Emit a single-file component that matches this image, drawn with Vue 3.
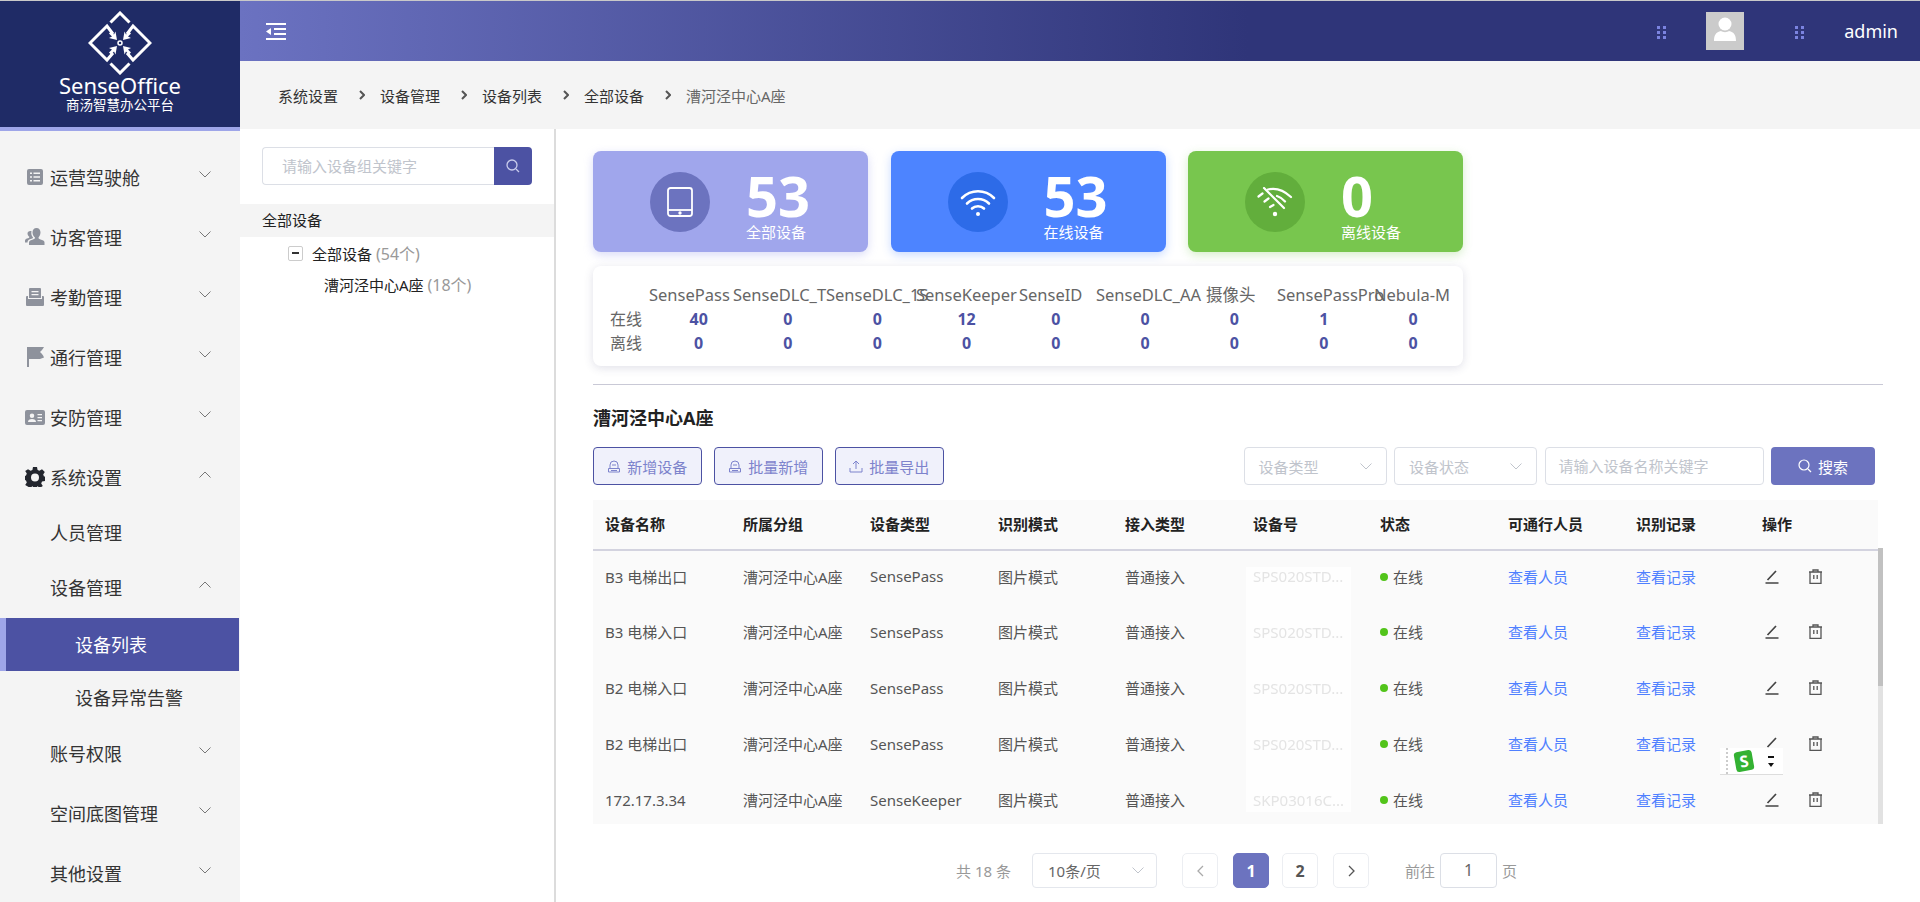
<template>
  <div class="page">
    <aside class="side">
      <div class="logo">
        <svg class="logo-mark" width="64" height="64" viewBox="0 0 64 64" fill="none" stroke="#fff" stroke-width="3">
          <path d="M22.500 11.500 32 2l9.500 9.500M22.500 52.500 32 62l9.500-9.500" />
          <path d="M25 23l-6-8L2 32l17 17 6-7" />
          <path d="M39 23l6-8 17 17-17 17-6-7" />
          <circle cx="32" cy="32" r="2" stroke-width="1.500" />
          <path fill="#fff" stroke="none" d="M29 29l-8-2 3-1.500-3-3 2-2 3 3 1.500-3zM35 29l8-2-3-1.500 3-3-2-2-3 3-1.500-3zM29 35l-8 2 3 1.500-3 3 2 2 3-3 1.500 3zM35 35l8 2-3 1.500 3 3-2 2-3-3-1.500 3z" />
        </svg>
        <div class="logo-name">SenseOffice</div>
        <div class="logo-sub">商汤智慧办公平台</div>
      </div>
      <nav class="menu">
        <div v-for="m in menu" :key="m.label" class="menu-item" :class="[m.kind, { active: m.active }]">
          <svg v-if="m.icon" class="menu-icon" :class="{ dark: m.icon === 'gear' }" width="20" height="20" viewBox="0 0 20 20" fill="currentColor">
            <path fill-rule="evenodd" :d="menuIcons[m.icon]" />
          </svg>
          <span>{{ m.label }}</span>
          <svg v-if="m.arrow" class="menu-arrow" width="12" height="7" viewBox="0 0 12 7" fill="none" stroke="#777" stroke-width="1">
            <path :d="m.arrow === 'up' ? 'M.5 6.500 6 1l5.500 5.500' : 'M.5.5 6 6 11.500.5'" />
          </svg>
        </div>
      </nav>
    </aside>

    <div class="right">
      <header class="topbar">
        <svg width="20" height="17" viewBox="0 0 20 17" fill="#fff">
          <path d="M0 0h20v2H0zM8 5h12v2H8zM8 10h12v2H8zM0 15h20v2H0zM0 8.500 5 5v7z" />
        </svg>
        <div class="topbar-right">
          <svg class="dots" width="9" height="13" viewBox="0 0 9 13" fill="#7b83e0">
            <path d="M0 0h3v3H0zM6 0h3v3H6zM0 5h3v3H0zM6 5h3v3H6zM0 10h3v3H0zM6 10h3v3H6z" />
          </svg>
          <div class="avatar">
            <svg width="22" height="24" viewBox="0 0 22 24" fill="#fff">
              <circle cx="11" cy="7" r="6.500" />
              <path d="M0 24c0-6 2-9 7-10 2 1.500 6 1.500 8 0 5 1 7 4 7 10z" />
            </svg>
          </div>
          <svg class="dots dots-2" width="9" height="13" viewBox="0 0 9 13" fill="#7b83e0">
            <path d="M0 0h3v3H0zM6 0h3v3H6zM0 5h3v3H0zM6 5h3v3H6zM0 10h3v3H0zM6 10h3v3H6z" />
          </svg>
          <span class="admin">admin</span>
        </div>
      </header>

      <div class="crumbs">
        <template v-for="(c, i) in crumbs" :key="c">
          <span class="crumb" :class="{ last: i === crumbs.length - 1 }">{{ c }}</span>
          <svg v-if="i < crumbs.length - 1" class="crumb-sep" width="6" height="10" viewBox="0 0 6 10" fill="none" stroke="#555" stroke-width="2">
            <path d="M1 1l4 4-4 4" />
          </svg>
        </template>
      </div>

      <div class="body">
        <section class="tree">
          <div class="tree-search">
            <div class="tree-input">请输入设备组关键字</div>
            <div class="tree-btn">
              <svg width="14" height="14" viewBox="0 0 14 14" fill="none" stroke="#c9ccec" stroke-width="1.300">
                <circle cx="6" cy="6" r="5" /><path d="M10 10l3 3" />
              </svg>
            </div>
          </div>
          <div class="tree-root">全部设备</div>
          <div class="tree-node">
            <span class="tree-toggle"><i></i></span>
            全部设备 <em>(54个)</em>
          </div>
          <div class="tree-leaf">漕河泾中心A座 <em>(18个)</em></div>
        </section>

        <main class="main">
          <div class="cards">
            <div v-for="c in cards" :key="c.label" class="card" :class="c.cls">
              <div class="card-circle">
                <svg v-if="c.cls === 'all'" width="26" height="30" viewBox="0 0 26 30" fill="none" stroke="#fff" stroke-width="1.800">
                  <rect x="1" y="1" width="24" height="28" rx="2.500" />
                  <path d="M1 23h24" />
                  <circle cx="13" cy="26" r=".8" fill="#fff" />
                </svg>
                <svg v-else-if="c.cls === 'on'" width="36" height="30" viewBox="0 0 36 30" fill="none" stroke="#fff" stroke-width="2.600" stroke-linecap="round">
                  <path d="M2 11c9-9 23-9 32 0M7 16.500c6-6 16-6 22 0M12 21.500c3-3 9-3 12 0" />
                  <circle cx="18" cy="27" r="2" fill="#fff" stroke="none" />
                </svg>
                <svg v-else width="36" height="30" viewBox="0 0 36 30" fill="none" stroke="#fff" stroke-width="2.200" stroke-linecap="round">
                  <path d="M11 2.500c8-2 16 1 23 7.500M1.500 9.500l4-3M20 9c3 1 6 3 8 5.500M7.500 14.500l4-3M13 20l3.500-2" />
                  <path d="M7 1l20 20" />
                  <circle cx="18" cy="27" r="2.200" fill="#fff" stroke="none" />
                </svg>
              </div>
              <div class="card-text">
                <div class="card-num">{{ c.num }}</div>
                <div class="card-label">{{ c.label }}</div>
              </div>
            </div>
          </div>

          <div class="stats">
            <div class="stat-heads">
              <span v-for="n in statNames" :key="n">{{ n }}</span>
            </div>
            <div class="stat-row">
              <span class="stat-label">在线</span>
              <b v-for="(v, i) in online" :key="i">{{ v }}</b>
            </div>
            <div class="stat-row">
              <span class="stat-label">离线</span>
              <b v-for="(v, i) in offline" :key="i">{{ v }}</b>
            </div>
          </div>

          <div class="divider"></div>
          <h2 class="title">漕河泾中心A座</h2>

          <div class="toolbar">
            <button v-for="b in actions" :key="b.label" class="act-btn">
              <svg width="14" height="14" viewBox="0 0 14 14" fill="none" stroke="currentColor" stroke-width="1">
                <path v-if="b.up" d="M1 9v4h12V9M7 10V2M4 5l3-3 3 3" />
                <path v-else d="M1.500 13V9.500h11V13zM3 9.500V6a4 4 0 0 1 8 0v3.500M5 6h4M4 11.500h6" />
              </svg>
              {{ b.label }}
            </button>
            <div class="filters">
              <div v-for="s in selects" :key="s" class="select">
                <span>{{ s }}</span>
                <svg width="12" height="7" viewBox="0 0 12 7" fill="none" stroke="#c0c4cc" stroke-width="1"><path d="M.5.5 6 6 11.500.5" /></svg>
              </div>
              <div class="keyword">请输入设备名称关键字</div>
              <button class="search-btn">
                <svg width="14" height="14" viewBox="0 0 14 14" fill="none" stroke="#fff" stroke-width="1.200">
                  <circle cx="6" cy="6" r="5" /><path d="M10 10l3 3" />
                </svg>
                搜索
              </button>
            </div>
          </div>

          <div class="table-area">
            <div class="table-wrap">
              <div class="sn-mask"></div>
              <table class="devices">
                <colgroup>
                  <col v-for="(w, i) in colWidths" :key="i" :width="w" />
                </colgroup>
                <thead>
                  <tr><th v-for="h in columns" :key="h">{{ h }}</th></tr>
                </thead>
                <tbody>
                  <tr v-for="r in rows" :key="r.name">
                    <td>{{ r.name }}</td>
                    <td>漕河泾中心A座</td>
                    <td>{{ r.type }}</td>
                    <td>图片模式</td>
                    <td>普通接入</td>
                    <td><span class="sn">{{ r.sn }}</span></td>
                    <td><i class="dot"></i>在线</td>
                    <td><a class="link">查看人员</a></td>
                    <td><a class="link">查看记录</a></td>
                    <td>
                      <div class="ops">
                        <svg width="14" height="15" viewBox="0 0 14 15" fill="none" stroke="#444" stroke-width="1.700">
                          <path d="M2.500 11 11 2M.5 14h13" />
                        </svg>
                        <svg width="15" height="15" viewBox="0 0 15 15" fill="none" stroke="#555" stroke-width="1.300">
                          <path d="M1 3h13M5 3V1h5v2M2 3v11.500h11V3M5.800 6v4M9.200 6v4" />
                        </svg>
                      </div>
                    </td>
                  </tr>
                </tbody>
              </table>
              <div class="ime">
                <span class="ime-logo"><span>S</span></span>
                <span class="ime-mark"><i></i><u></u></span>
              </div>
            </div>
            <div class="scrollbar"><div class="thumb"></div></div>
          </div>

          <div class="pager">
            <span class="total">共 18 条</span>
            <div class="size">
              <span>10条/页</span>
              <svg width="12" height="7" viewBox="0 0 12 7" fill="none" stroke="#c0c4cc" stroke-width="1"><path d="M.5.5 6 6 11.500.5" /></svg>
            </div>
            <div class="pg-btn pg-prev">
              <svg width="7" height="12" viewBox="0 0 7 12" fill="none" stroke="#aaa" stroke-width="1.300"><path d="M6 1 1 6l5 5" /></svg>
            </div>
            <div class="pg-btn pg-on">1</div>
            <div class="pg-btn">2</div>
            <div class="pg-btn pg-next">
              <svg width="7" height="12" viewBox="0 0 7 12" fill="none" stroke="#555" stroke-width="1.300"><path d="m1 1 5 5-5 5" /></svg>
            </div>
            <span class="goto">前往</span>
            <div class="pg-input">1</div>
            <span class="goto-end">页</span>
          </div>
        </main>
      </div>
    </div>
  </div>
</template>

<script setup>
const menuIcons = {
  list: 'M4 2h12a2 2 0 0 1 2 2v12a2 2 0 0 1-2 2H4a2 2 0 0 1-2-2V4a2 2 0 0 1 2-2zM5 5.500V7h2V5.500zM8.500 5.500V7H15V5.500zM5 9.200v1.500h2V9.200zM8.500 9.200v1.500H15V9.200zM5 13v1.500h2V13zM8.500 13v1.500H15V13z',
  users: 'M11.500 1c2.500 0 4 2 4 4.500S14 10 13.500 10.500c0 1 .5 1.500 2 2 2 .7 4 1 4 3V18H4v-2.500c0-2 2-2.300 4-3 1.500-.5 2-1 2-2C9 10 7.500 8 7.500 5.500S9 1 11.500 1zM5.500 4c.4 0 .8 0 1 .2-.5 2-.2 4.300 1.500 6.300 0 .7-.5 1-1.500 1.300-2.500.8-4 1.500-4 3.700H0v-2c0-1.500 1.500-1.800 3-2.300 1-.3 1.300-.8 1.300-1.500C3.500 9.200 2.500 8 2.500 6.500 2.500 5 3.500 4 5.500 4z',
  print: 'M5 1h10a1 1 0 0 1 1 1v9H4V2a1 1 0 0 1 1-1zM6.500 4v1.300h7V4zM6.500 7v1.300h7V7zM2 9h1v3h14V9h1a1 1 0 0 1 1 1v8a1 1 0 0 1-1 1H2a1 1 0 0 1-1-1v-8a1 1 0 0 1 1-1z',
  flag: 'M2 0h2v20H2zM4 0h15c-1 2-2 3-4 5 2 2 3 3 4 5.500l-4 1.500H4z',
  card: 'M2 3h16a2 2 0 0 1 2 2v11a2 2 0 0 1-2 2H2a2 2 0 0 1-2-2V5a2 2 0 0 1 2-2zM7 6.500A2.200 2.200 0 1 0 7 11 2.200 2.200 0 0 0 7 6.500zM3 15h8c0-2-1.500-3-4-3s-4 1-4 3zM12.500 7v1.300H17V7zM12.500 10v1.300H17V10zM12.500 13v1.300H17V13z',
  gear: 'M8 0h4l.6 3 1.800.8L17 2.200 19.800 5l-1.600 2.600.8 1.800 3 .6-2 0v0 4l-3 .6-.8 1.800 1.600 2.600L15 20.800l-2.600-1.600-.4.200V20H8v-.6l-.4-.2L5 20.800 .2 18l1.600-2.600L1 13.600l-1-.6V9l1-.6.8-1.800L.2 4 3 2.200l2.600 1.600L7.400 3zM10 6.500a4 4 0 1 0 0 8 4 4 0 0 0 0-8z',
}

const menu = [
  { label: '运营驾驶舱', icon: 'list', arrow: 'down', kind: 'top' },
  { label: '访客管理', icon: 'users', arrow: 'down', kind: 'top' },
  { label: '考勤管理', icon: 'print', arrow: 'down', kind: 'top' },
  { label: '通行管理', icon: 'flag', arrow: 'down', kind: 'top' },
  { label: '安防管理', icon: 'card', arrow: 'down', kind: 'top' },
  { label: '系统设置', icon: 'gear', arrow: 'up', kind: 'top' },
  { label: '人员管理', kind: 'sub short' },
  { label: '设备管理', arrow: 'up', kind: 'sub' },
  { label: '设备列表', kind: 'leaf', active: true },
  { label: '设备异常告警', kind: 'leaf' },
  { label: '账号权限', arrow: 'down', kind: 'sub' },
  { label: '空间底图管理', arrow: 'down', kind: 'sub' },
  { label: '其他设置', arrow: 'down', kind: 'sub' },
]

const crumbs = ['系统设置', '设备管理', '设备列表', '全部设备', '漕河泾中心A座']

const cards = [
  { cls: 'all', num: 53, label: '全部设备' },
  { cls: 'on', num: 53, label: '在线设备' },
  { cls: 'off', num: 0, label: '离线设备' },
]

const statNames = ['SensePass', 'SenseDLC_T', 'SenseDLC_1S', 'SenseKeeper', 'SenseID', 'SenseDLC_AA', '摄像头', 'SensePassPro', 'Nebula-M']
const online = [40, 0, 0, 12, 0, 0, 0, 1, 0]
const offline = [0, 0, 0, 0, 0, 0, 0, 0, 0]

const actions = [
  { label: '新增设备' },
  { label: '批量新增' },
  { label: '批量导出', up: true },
]
const selects = ['设备类型', '设备状态']

const columns = ['设备名称', '所属分组', '设备类型', '识别模式', '接入类型', '设备号', '状态', '可通行人员', '识别记录', '操作']
const colWidths = [138, 127, 128, 127, 128, 127, 128, 128, 126, 129]
const rows = [
  { name: 'B3 电梯出口', type: 'SensePass', sn: 'SPS020STD...' },
  { name: 'B3 电梯入口', type: 'SensePass', sn: 'SPS020STD...' },
  { name: 'B2 电梯入口', type: 'SensePass', sn: 'SPS020STD...' },
  { name: 'B2 电梯出口', type: 'SensePass', sn: 'SPS020STD...' },
  { name: '172.17.3.34', type: 'SenseKeeper', sn: 'SKP03016C...' },
]
</script>

<style scoped>
.page { display: flex; height: 902px; overflow: hidden; border-top: 1px solid #c9c9c9; box-sizing: border-box; font-family: "Noto Sans", "Noto Sans CJK SC", sans-serif; font-size: 15px; color: #333; }

.side { width: 242px; flex: none; background: #f4f4f4; border-right: 2px solid #dcdcdc; box-sizing: border-box; }
.logo { width: 240px; height: 130px; box-sizing: border-box; padding-top: 10px; background: #1f2b66; border-bottom: 4px solid #9ea5e8; color: #fff; display: flex; flex-direction: column; align-items: center; }
.logo-name { font-size: 22px; line-height: 24px; margin-top: -2px; }
.logo-sub { font-size: 13.5px; line-height: 18px; margin-top: -1px; }
.menu { width: 239px; padding-top: 17px; }
.menu-item { display: flex; align-items: center; height: 60px; font-size: 18px; color: #333; padding-left: 50px; padding-bottom: 2px; box-sizing: border-box; }
.menu-item.top { padding-left: 25px; }
.menu-item.short { height: 50px; }
.menu-item.leaf { height: 53px; padding-left: 75px; }
.menu-item.active { background: #4c52a3; border-left: 6px solid #9ea5e8; padding-left: 69px; color: #fff; }
.menu-icon { margin-right: 5px; color: #8e929c; }
.menu-icon.dark { color: #23262e; }
.menu-arrow { margin-left: auto; margin-right: 28px; margin-bottom: 6px; }

.right { flex: 1; min-width: 0; margin-left: -2px; display: flex; flex-direction: column; }
.topbar { height: 60px; flex: none; display: flex; align-items: center; padding-left: 26px; background: linear-gradient(90deg, #6b72c1 0, #2f3579 60%); }
.topbar-right { margin-left: auto; display: flex; align-items: center; padding-right: 22px; }
.dots { margin-top: 2px; }
.dots-2 { margin-left: 51px; }
.avatar { width: 38px; height: 38px; margin-left: 40px; background: #cbcbcb; display: flex; align-items: flex-end; justify-content: center; padding-bottom: 9px; box-sizing: border-box; }
.admin { margin-left: 40px; font-size: 18px; color: #fff; }

.crumbs { height: 68px; flex: none; display: flex; align-items: center; padding-left: 38px; background: #f4f4f4; }
.crumb { color: #333; width: 60px; white-space: nowrap; }
.crumb.last { color: #666; }
.crumb-sep { margin-left: 21px; margin-right: 15px; }

.body { flex: 1; display: flex; min-height: 0; background: #fff; }

.tree { width: 314px; flex: none; border-right: 2px solid #dcdcdc; padding-top: 18px; box-sizing: content-box; }
.tree-search { display: flex; height: 38px; margin: 0 22px 19px; }
.tree-input { flex: 1; border: 1px solid #dcdfe6; border-right: 0; border-radius: 4px 0 0 4px; padding-left: 19px; line-height: 36px; color: #c0c4cc; }
.tree-btn { width: 38px; background: #4c52a3; border-radius: 0 4px 4px 0; display: flex; align-items: center; justify-content: center; }
.tree-root { height: 33px; line-height: 33px; padding-left: 22px; background: #f4f4f4; color: #222; }
.tree-node { display: flex; align-items: center; gap: 4px; height: 32px; padding-left: 48px; color: #222; }
.tree-node em, .tree-leaf em { font-style: normal; font-size: 16px; color: #999; }
.tree-toggle { width: 15px; height: 15px; box-sizing: border-box; margin-right: 5px; border: 1px solid #ccc; border-radius: 2px; display: flex; align-items: center; justify-content: center; }
.tree-toggle i { width: 7px; height: 2px; background: #333; }
.tree-leaf { height: 33px; line-height: 33px; padding-left: 84px; color: #222; }

.main { flex: 1; min-width: 0; padding: 22px 37px 0 37px; }
.cards { display: flex; gap: 22.500px; }
.card { width: 275px; height: 101px; border-radius: 8px; display: flex; align-items: center; padding-left: 57px; box-sizing: border-box; color: #fff; }
.card.all { background: #a0a6ec; box-shadow: 0 3px 10px rgba(160, 166, 236, .4); }
.card.on { background: #4d84ff; box-shadow: 0 3px 10px rgba(77, 132, 255, .3); }
.card.off { background: #78c64e; box-shadow: 0 3px 10px rgba(120, 198, 78, .3); }
.card-circle { width: 60px; height: 60px; border-radius: 50%; display: flex; align-items: center; justify-content: center; }
.all .card-circle { background: #6c73bf; }
.on .card-circle { background: #2d6be8; }
.off .card-circle { background: #62ae3c; }
.card-text { margin-left: 36px; padding-top: 8px; }
.card-num { font-size: 56px; font-weight: 700; line-height: 52px; }
.card-label { font-size: 15px; line-height: 22px; }

.stats { width: 870px; height: 100px; box-sizing: border-box; padding-top: 17px; margin-top: 14px; background: #fff; border-radius: 8px; box-shadow: 0 2px 10px rgba(60, 60, 110, .16); font-size: 16px; color: #666; }
.stat-heads { display: grid; grid-template-columns: 84px 93px 90px 103px 77px 110px 71px 97px 90px; padding-left: 56px; height: 24px; line-height: 24px; font-size: 16.500px; }
.stat-heads span { white-space: nowrap; }
.stat-row { display: grid; grid-template-columns: 61px repeat(9, 89.300px); height: 24px; line-height: 24px; }
.stat-row b { text-align: center; font-size: 16px; font-weight: 700; color: #4c52a3; }
.stat-label { padding-left: 17px; }

.divider { height: 1px; margin-top: 18px; background: #c9c9d6; }
.title { margin: 20px 0 16px; font-size: 18px; line-height: 26px; font-weight: 700; color: #222; }

.toolbar { display: flex; height: 38px; }
.act-btn { display: flex; align-items: center; justify-content: center; gap: 6px; width: 108.500px; height: 38px; margin-right: 12.500px; padding: 0; font: inherit; color: #7d83cc; background: #f0f1fb; border: 1px solid #4c52a3; border-radius: 4px; }
.filters { margin-left: auto; display: flex; gap: 7.500px; padding-right: 8px; }
.select { display: flex; align-items: center; justify-content: space-between; width: 143px; box-sizing: border-box; padding: 0 14px; color: #c0c4cc; border: 1px solid #dcdfe6; border-radius: 4px; }
.keyword { width: 219px; box-sizing: border-box; padding-left: 13px; line-height: 36px; color: #c0c4cc; border: 1px solid #dcdfe6; border-radius: 4px; }
.search-btn { display: flex; align-items: center; justify-content: center; gap: 6px; width: 104px; padding: 0; font: inherit; color: #fff; background: #6c73bf; border: 0; border-radius: 4px; }

.table-area { display: flex; height: 324px; margin-top: 15px; }
.table-wrap { position: relative; width: 1286px; overflow: hidden; background: #fafafa; }
.sn-mask { position: absolute; left: 653px; top: 67px; width: 105px; height: 245px; background: #fefefe; }
.devices { position: relative; width: 1286px; table-layout: fixed; border-collapse: collapse; }
.devices th { height: 50px; padding: 0 0 2px 12px; box-sizing: border-box; text-align: left; font-weight: 700; color: #222; border-bottom: 2px solid #d3d3df; }
.devices td { height: 56px; padding: 0 0 5px 12px; box-sizing: border-box; color: #555; white-space: nowrap; }
.sn { color: #e4e4e4; filter: blur(.4px); }
.dot { display: inline-block; width: 8px; height: 8px; margin-right: 5px; border-radius: 50%; background: #52c41a; vertical-align: 2px; }
.link { color: #4f80ff; }
.ops { display: flex; gap: 29px; padding-left: 3px; }
.ime { position: absolute; left: 1127px; top: 248px; width: 63px; height: 27px; box-sizing: border-box; display: flex; align-items: center; gap: 10px; padding-left: 15px; background: #fff; border-bottom: 1px solid #ddd; }
.ime::before { content: ""; position: absolute; left: 6px; top: 0; bottom: 0; border-left: 2px dotted #ccc; }
.ime-logo { width: 18px; height: 20px; display: flex; align-items: center; justify-content: center; background: #34b233; border-radius: 3px; transform: rotate(-10deg); }
.ime-logo span { color: #fff; font-weight: 700; font-size: 16px; line-height: 1; }
.ime-mark { display: flex; flex-direction: column; align-items: center; gap: 5px; margin-left: 5px; }
.ime-mark i { width: 6px; height: 2px; background: #111; }
.ime-mark u { width: 0; height: 0; border-left: 3.500px solid transparent; border-right: 3.500px solid transparent; border-top: 4px solid #111; }
.scrollbar { width: 5px; margin-top: 48px; background: #e2e2e2; }
.thumb { height: 138px; background: #c1c1c1; }

.pager { display: flex; align-items: center; height: 35px; margin-top: 29px; padding-left: 363px; color: #999; }
.total { width: 76px; white-space: nowrap; }
.size { display: flex; align-items: center; justify-content: space-between; width: 125px; height: 35px; box-sizing: border-box; padding: 0 12px 0 15px; color: #666; border: 1px solid #e4e7ed; border-radius: 4px; }
.pg-btn { display: flex; align-items: center; justify-content: center; width: 36px; height: 35px; box-sizing: border-box; margin-left: 13px; border: 1px solid #eceef2; border-radius: 5px; font-size: 16px; font-weight: 700; color: #555; }
.pg-prev { margin-left: 25px; }
.pg-on { margin-left: 15px; background: #6c73bf; border-color: #6c73bf; color: #fff; }
.pg-next { margin-left: 15px; }
.goto { margin-left: 36px; }
.pg-input { width: 57px; height: 35px; box-sizing: border-box; margin-left: 5px; border: 1px solid #dcdfe6; border-radius: 4px; line-height: 33px; text-align: center; font-size: 16px; color: #666; }
.goto-end { margin-left: 5px; }
</style>

<style>
html, body { margin: 0; overflow: hidden; }
</style>
